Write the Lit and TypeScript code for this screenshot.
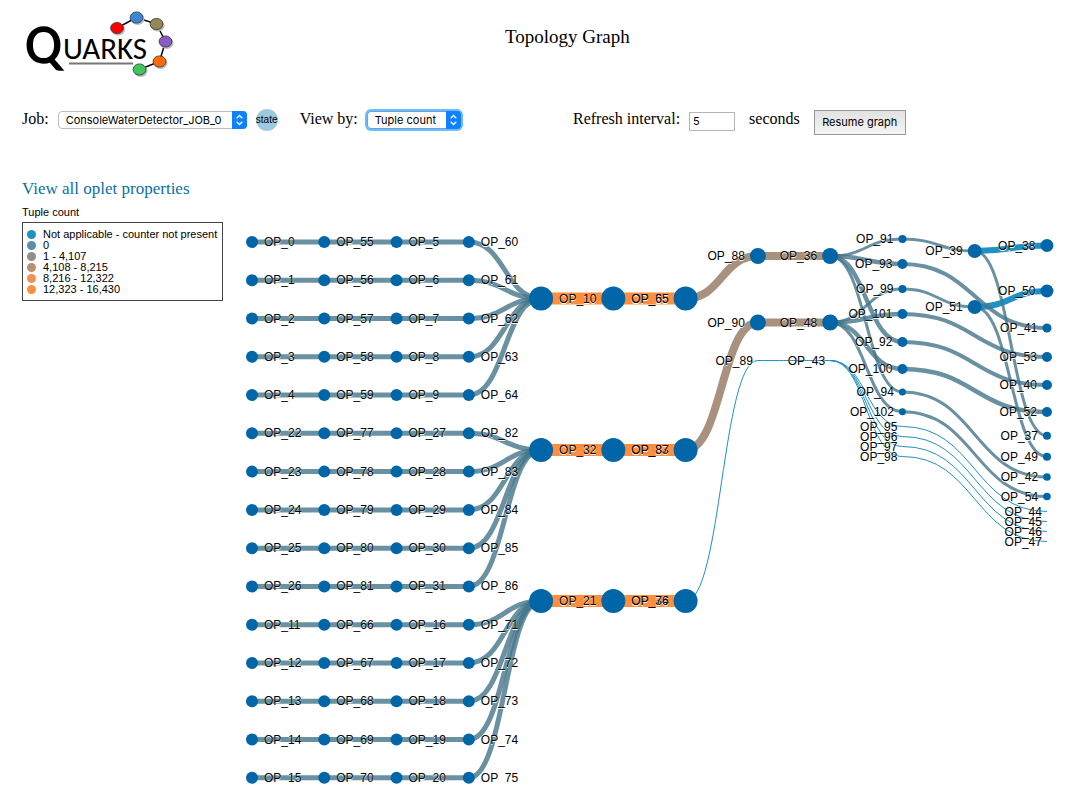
import { LitElement, html, svg, css } from "lit";
import { customElement } from "lit/decorators.js";

type Tone = "idle" | "none" | "mid" | "high";
interface OpNode { id: number; col: number; y: number; r: number }
interface OpLink { from: number; to: number; tone: Tone; w: number }

const COL_STEP = 72.27;
const ROW_STEP = 38.27;
const nodes: OpNode[] = [];
const links: OpLink[] = [];
const add = (id: number, col: number, y: number, r: number) => nodes.push({ id, col, y, r });
const join = (from: number, to: number, tone: Tone, w: number) => links.push({ from, to, tone, w });

/* Sensor chains: four small oplets feeding one large fan-in oplet. */
const chains: number[][] = [
  [0, 55, 5, 60, 10], [1, 56, 6, 61, 10], [2, 57, 7, 62, 10], [3, 58, 8, 63, 10], [4, 59, 9, 64, 10],
  [22, 77, 27, 82, 32], [23, 78, 28, 83, 32], [24, 79, 29, 84, 32], [25, 80, 30, 85, 32], [26, 81, 31, 86, 32],
  [11, 66, 16, 71, 21], [12, 67, 17, 72, 21], [13, 68, 18, 73, 21], [14, 69, 19, 74, 21], [15, 70, 20, 75, 21],
];
chains.forEach((chain, row) => {
  chain.slice(0, 4).forEach((id, col) => add(id, col, 22 + row * ROW_STEP, 6));
  for (let i = 0; i < 4; i++) join(chain[i], chain[i + 1], "idle", 5);
});

/* The last oplet of a trunk is painted first, so the middle one's name stays on top. */
const trunks: [number[], number][] = [[[10, 65, 35], 78.5], [[32, 87, 33], 230], [[21, 76, 34], 381]];
trunks.forEach(([ids, y]) => {
  [2, 1, 0].forEach((i) => add(ids[i], 4 + i, y, 12));
  join(ids[0], ids[1], "high", 12);
  join(ids[1], ids[2], "high", 12);
});

const placed: [number, number, number, number][] = [
  [88, 7, 36, 8], [36, 8, 36, 8], [90, 7, 102.5, 8], [48, 8, 102.5, 8], [89, 7, 140.5, 0], [43, 8, 140.5, 0],
  [91, 9, 19, 4], [93, 9, 44, 5], [99, 9, 69, 4], [101, 9, 94, 5], [92, 9, 122, 5], [100, 9, 149, 5],
  [94, 9, 172, 3.5], [102, 9, 191.7, 3.5], [95, 9, 206.5, 0], [96, 9, 216.5, 0], [97, 9, 226.5, 0], [98, 9, 236.5, 0],
  [39, 10, 31, 7], [51, 10, 87, 7],
  [38, 11, 25.5, 6.5], [50, 11, 71, 6.5], [41, 11, 108, 4.5], [53, 11, 137, 5], [40, 11, 165, 5], [52, 11, 192, 5],
  [37, 11, 215.7, 4], [49, 11, 236.7, 4], [42, 11, 257, 3.8], [54, 11, 276.5, 3.8],
  [44, 11, 291.5, 0], [45, 11, 301.5, 0], [46, 11, 311.5, 0], [47, 11, 321.5, 0],
];
placed.forEach(([id, col, y, r]) => add(id, col, y, r));

const routed: [number, number, Tone, number][] = [
  [35, 88, "mid", 8], [33, 90, "mid", 8], [34, 89, "none", 1], [88, 36, "mid", 8], [90, 48, "mid", 8], [89, 43, "none", 1],
  [36, 91, "idle", 3], [36, 93, "idle", 4.5], [36, 92, "idle", 4.5], [36, 94, "idle", 3],
  [48, 99, "idle", 3], [48, 101, "idle", 4.5], [48, 100, "idle", 4.5], [48, 102, "idle", 3],
  [43, 95, "none", 1], [43, 96, "none", 1], [43, 97, "none", 1], [43, 98, "none", 1],
  [91, 39, "idle", 3], [99, 51, "idle", 3], [39, 38, "none", 6], [51, 50, "none", 6],
  [39, 37, "idle", 3], [51, 49, "idle", 3], [93, 41, "idle", 4], [101, 53, "idle", 4], [92, 40, "idle", 4],
  [100, 52, "idle", 4.5], [94, 42, "idle", 3], [102, 54, "idle", 3],
  [95, 44, "none", 1], [96, 45, "none", 1], [97, 46, "none", 1], [98, 47, "none", 1],
];
routed.forEach(([a, b, tone, w]) => join(a, b, tone, w));

const byId = new Map(nodes.map((n) => [n.id, n]));
const nodeX = (n: OpNode) => 12 + n.col * COL_STEP;

function curve(l: OpLink): string {
  const a = byId.get(l.from)!;
  const b = byId.get(l.to)!;
  const x0 = nodeX(a);
  const x1 = nodeX(b);
  const m = (x0 + x1) / 2;
  return `M${x0},${a.y}C${m},${a.y} ${m},${b.y} ${x1},${b.y}`;
}

@customElement("topology-graph")
export class TopologyGraph extends LitElement {
  static styles = css`
    :host { display: block; }
    .graph { display: block; width: 100%; height: 564px; overflow: visible; }
    .link { fill: none; }
    .idle { stroke: #44768a; stroke-opacity: 0.8; }
    .none { stroke: #2190c2; }
    .mid { stroke: #a8917f; }
    .high { stroke: #ff8f3f; }
    .dot { fill: #0066a8; }
    .name { font: 12px "Liberation Sans", Arial, sans-serif; fill: #000; text-shadow: 0 1px 0 #fff; }
    .before { text-anchor: end; }
  `;

  render() {
    return html`<svg class="graph" role="img" aria-label="Topology Graph">
      ${links.map((l) => svg`<path class="link ${l.tone}" stroke-width=${l.w} d=${curve(l)}></path>`)}
      ${nodes.map((n) => {
        const left = n.col > 5;
        const x = nodeX(n) + (left ? -5 - n.r : 6 + n.r);
        return svg`<circle class="dot" cx=${nodeX(n)} cy=${n.y} r=${n.r}></circle>
          <text class="name ${left ? "before" : ""}" x=${x} y=${n.y} dy="4">OP_${n.id}</text>`;
      })}
    </svg>`;
  }
}

const legend: [string, string][] = [
  ["#2190c2", "Not applicable - counter not present"],
  ["#5b8fa8", "0"],
  ["#8f8f87", "1 - 4,107"],
  ["#bb8f70", "4,108 - 8,215"],
  ["#f28f57", "8,216 - 12,322"],
  ["#ff8f3f", "12,323 - 16,430"],
];

const beads: [number, number, string][] = [
  [95, 18, "#ff0000"], [114.5, 7.5, "#3a86d6"], [134.5, 14, "#938953"],
  [143.5, 31.5, "#8a5bc7"], [137.5, 51.5, "#ff6a0a"], [117.5, 59.5, "#3fc55c"],
];

@customElement("app-root")
export class AppRoot extends LitElement {
  static styles = css`
    :host { display: block; overflow: hidden; background: #fff; color: #000; font: 16px/20px "Liberation Serif", "Times New Roman", serif; }
    .top { display: grid; grid-template-columns: 483px 1fr; padding: 10px 22px 23px; }
    .logo { display: block; width: 156px; height: 70px; overflow: visible; }
    .logo-q { font: 55px Carlito, Lato, "Open Sans", sans-serif; stroke: #000; stroke-width: 1.4; }
    .logo-rest { font: 31px Carlito, Lato, "Open Sans", sans-serif; }
    .title { margin: 16px 0 0; font-size: 19px; line-height: 22px; font-weight: 400; }
    .controls { display: grid; grid-template-columns: 551px 1fr; padding: 0 22px; height: 32px; }
    .group { display: flex; align-items: center; white-space: nowrap; }
    .pick { display: grid; margin: 2px 0 0 9px; border-radius: 4px; }
    .pick > * { grid-area: 1 / 1; }
    .pick select { appearance: none; height: 18px; margin: 0; padding: 0 24px 0 7px; border: 1px solid #bcbcbc; border-radius: 4px; background: #fff; color: #000; font: 11px/16px Inter, sans-serif; outline: none; }
    .job { width: 189px; }
    .view { width: 94px; }
    .pick .focused { border-color: #5aa7e8; box-shadow: 0 0 0 2px #6fbcfa; }
    .arrows { justify-self: end; width: 15px; height: 18px; pointer-events: none; }
    .state { display: grid; place-items: center; width: 22px; height: 22px; margin: 2px 22px 0 9px; border-radius: 50%; background: #9ecae1; font: 10px/12px "Liberation Sans", Arial, sans-serif; }
    .interval { box-sizing: border-box; width: 46px; height: 19px; margin: 4px 14px 0 9px; padding: 0 3px; border: 1px solid #b5b5b5; font: 11px Inter, sans-serif; }
    .resume { box-sizing: border-box; width: 92px; height: 25px; margin: 6px 0 0 14px; padding: 0; border: 1px solid #999; background: linear-gradient(#e2e2e2, #f4f4f4); color: #000; font: 11px Inter, sans-serif; }
    .main { display: grid; grid-template-columns: 201px 1fr; column-gap: 17px; padding: 44px 0 0 22px; }
    .props { color: #0b6fa6; text-decoration: none; font-size: 17px; }
    .caption { margin: 7px 0 4px; font: 11px/12px "Liberation Sans", Arial, sans-serif; }
    .legend { margin: 0; padding: 6px 4px 5px; border: 1px solid #444; list-style: none; font: 11px/11px "Liberation Sans", Arial, sans-serif; white-space: nowrap; }
    .legend li { display: flex; align-items: center; gap: 7px; }
    .swatch { width: 9px; height: 9px; border-radius: 50%; }
    topology-graph { padding-top: 41px; }
  `;

  private arrows() {
    return html`<svg class="arrows" viewBox="0 0 15 18" aria-hidden="true">
      <path d="M0 0H11Q15 0 15 4V14Q15 18 11 18H0Z" fill="#0f80ff"></path>
      <path d="M4.7 7.3 7.5 4.5 10.3 7.3M4.7 10.7 7.5 13.5 10.3 10.7" fill="none" stroke="#fff" stroke-width="1.3"></path>
    </svg>`;
  }

  render() {
    return html`
      <header class="top">
        <svg class="logo" viewBox="0 0 156 70" role="img" aria-label="Quarks">
          <text class="logo-q" x="3" y="53">Q</text>
          <text class="logo-rest" x="41" y="49">UARKS</text>
          <path d="M47 53.5H111" stroke="#777" stroke-width="2"></path>
          <path d="M95 18 114.5 7.5 134.5 14 143.5 31.5 137.5 51.5 117.5 59.5" fill="none" stroke="#000" stroke-width="1.5"></path>
          ${beads.map(([x, y, c]) => svg`<ellipse cx=${x + 1.2} cy=${y + 1.4} rx="6.8" ry="6" fill="#bbb"></ellipse>
            <ellipse cx=${x} cy=${y} rx="6.4" ry="5.6" fill=${c} stroke="#333" stroke-width="0.8"></ellipse>`)}
        </svg>
        <h1 class="title">Topology Graph</h1>
      </header>
      <div class="controls">
        <div class="group">
          <label for="job">Job:</label>
          <span class="pick"><select id="job" class="job"><option>ConsoleWaterDetector_JOB_0</option></select>${this.arrows()}</span>
          <span class="state">state</span>
          <label for="view">View by:</label>
          <span class="pick"><select id="view" class="view focused"><option>Tuple count</option></select>${this.arrows()}</span>
        </div>
        <div class="group">
          <label for="interval">Refresh interval:</label>
          <input id="interval" class="interval" type="text" value="5" />
          <span>seconds</span>
          <button class="resume" type="button">Resume graph</button>
        </div>
      </div>
      <main class="main">
        <section>
          <a class="props" href="#">View all oplet properties</a>
          <p class="caption">Tuple count</p>
          <ul class="legend">
            ${legend.map(([c, t]) => html`<li><span class="swatch" style="background:${c}"></span>${t}</li>`)}
          </ul>
        </section>
        <topology-graph></topology-graph>
      </main>`;
  }
}
